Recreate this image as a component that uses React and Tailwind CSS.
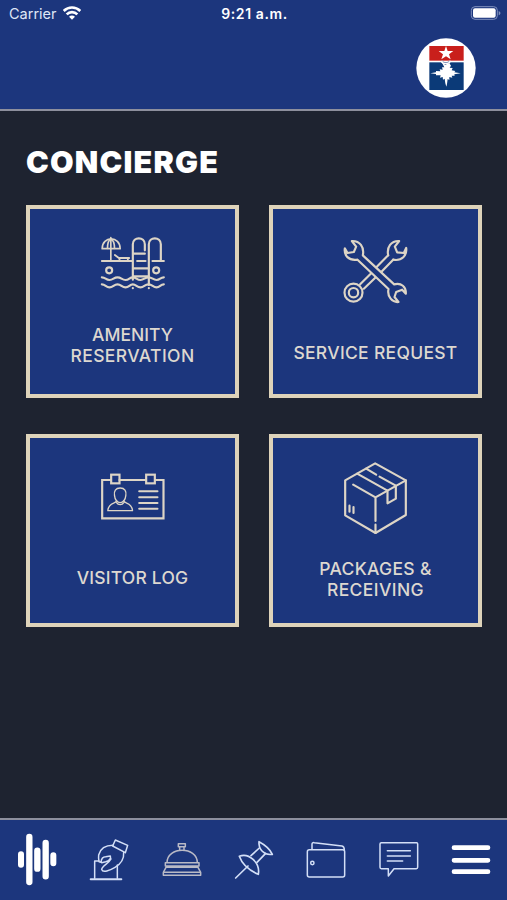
import clsx from 'clsx';

const CardIcon = ({ viewBox, children }) => (
  <svg viewBox={viewBox} className="w-[72px] h-[80px] shrink-0" fill="none" stroke="#ddd5c6" strokeWidth="6.5" strokeLinecap="round" strokeLinejoin="round">
    {children}
  </svg>
);

const NavIcon = ({ viewBox, children }) => (
  <svg viewBox={viewBox} className="w-[60px] h-[80px]" fill="none" stroke="#d3dff7" strokeWidth="4.5" strokeLinecap="round" strokeLinejoin="round">
    {children}
  </svg>
);

const PoolIcon = () => (
  <CardIcon viewBox="35.5 18 216 240">
    <path d="M51 71C51 32 105 32 105 71Z" strokeWidth="5" />
    <path d="M67 70C67 57 71 45 77 42C84 45 88 57 88 70M77 38V107" strokeWidth="5" />
    <path d="M50 108H141M89 90L101 99H132M103 99V107M128 99V107" strokeWidth="5.5" />
    <path d="M143 164V58C143 34 179 34 179 58V76" />
    <path d="M191 180V58C191 34 227 34 227 58V108M202 108H236M156 108H181" />
    <path d="M144 86H179M144 130H190M144 154H190" />
    <circle cx="72" cy="136" r="9" />
    <circle cx="213" cy="136" r="9" />
    <path d="M50 157C61 157 62 165 73 165S86 157 97 157S110 165 121 165S133 157 143 157S155 165 166 165S178 157 190 157S203 165 214 165S225 157 236 157" />
    <path d="M50 178C61 178 62 187 73 187S86 178 97 178S110 187 121 187S133 178 143 178S155 187 166 187S178 178 190 178S203 187 214 187S225 178 236 178" />
    <path d="M143 189V189.5M191 189V189.5" />
  </CardIcon>
);

const WrenchIcon = () => (
  <CardIcon viewBox="44.5 18 216 240">
    <path d="M105 178L142 141M116 191L155 154M149 131L189 91M166 143L204 104" />
    <circle cx="85" cy="203" r="27" />
    <circle cx="85" cy="203" r="14" />
    <path d="M189 91C184 66 198 47 222 48L209 65L216 82L236 84L243 69C246 91 230 109 204 104" />
    <path d="M80 48L93 65L86 81L67 84L59 70C56 91 70 108 97 104L190 192C185 215 202 233 220 231L208 216L213 201L231 194L242 206C243 185 229 173 207 178L113 91C118 66 104 47 80 48Z" fill="#1c367d" />
  </CardIcon>
);

const BadgeIcon = () => (
  <CardIcon viewBox="35.5 0 216 240">
    <path d="M77 60H51V175H235V60H210M103 60H182" strokeLinejoin="miter" />
    <rect x="78" y="44" width="25" height="26" strokeLinejoin="miter" />
    <rect x="183" y="44" width="26" height="26" strokeLinejoin="miter" />
    <path d="M162 94H217M162 112H217M162 129H217M162 146H217" strokeWidth="6" />
    <path d="M105 84C91 84 86 94 88 106C89 118 96 128 105 128S121 118 122 106C124 94 119 84 105 84Z" strokeWidth="4" />
    <path d="M94 123C91 132 70 127 68 152H142C140 127 119 132 116 123M94 128C99 136 111 136 116 128" strokeWidth="4" />
  </CardIcon>
);

const BoxIcon = () => (
  <CardIcon viewBox="44.5 30 216 240">
    <path d="M150 40L242 91V195L151 249L60 196V91Z" />
    <path d="M242 91L151 142L84 104M151 142V213M151 224V249" />
    <path d="M96 71L187 122V160L212 146V107L163 80M123 56L153 74" />
    <path d="M73 167V185M85 171V189" />
  </CardIcon>
);

const cards = [
  { icon: <PoolIcon />, offset: 'mt-[13px]', lines: [['AMENITY', 'tracking-[0px]'], ['RESERVATION', 'tracking-[0.4px]']] },
  { icon: <WrenchIcon />, offset: 'mt-[31px]', lines: [['SERVICE REQUEST', 'tracking-[0.3px]']] },
  { icon: <BadgeIcon />, offset: 'mt-[27px]', lines: [['VISITOR LOG', 'tracking-[0.2px]']] },
  { icon: <BoxIcon />, offset: 'mt-[18px]', lines: [['PACKAGES &', 'tracking-[0.3px]'], ['RECEIVING', 'tracking-[0.4px]']] },
];

function Header() {
  return (
    <header className="h-[111px] shrink-0 bg-[#1c367d] border-b-2 border-[#8d8f9d] text-white">
      <div className="grid grid-cols-3 items-center h-[27px] pl-[9px] pr-[6px]">
        <div className="flex items-center gap-[6px] text-[14.5px] text-[#dfe6f6]">
          Carrier
          <svg viewBox="0 0 54 42" className="w-[18px] h-[14px] -mt-[2px]" fill="none" stroke="#fff" strokeWidth="8">
            <path d="M2 15C16 1 38 1 52 15M11 25C20 16 34 16 43 25" />
            <path d="M27 41L18 32C23 27 31 27 36 32Z" fill="#fff" stroke="none" />
          </svg>
        </div>
        <div className="text-center text-[14px] font-semibold tracking-[0.6px] -ml-[1px]">9:21 a.m.</div>
        <svg viewBox="0 0 93 42" className="w-[31px] h-[14px] -mt-[2px] justify-self-end">
          <rect x="4" y="2" width="78" height="38" rx="11" fill="none" stroke="#7f90bd" strokeWidth="3" />
          <rect x="9" y="7" width="68" height="28" rx="6" fill="#fff" />
          <path d="M86 15C93 18 93 25 86 28Z" fill="#7f90bd" />
        </svg>
      </div>
      <div className="flex justify-end pr-[31px] pt-[11px]">
        <svg viewBox="48 112 180 180" className="w-[60px] h-[60px]">
          <circle cx="138" cy="202" r="89" fill="#fff" />
          <rect x="88" y="136" width="103" height="44" fill="#c91f1b" />
          <rect x="88" y="185" width="103" height="83" fill="#0b3a78" />
          <path d="M138 136L143 151H160L147 161L152 176L138 167L124 176L129 161L116 151H133Z" fill="#fff" />
          <path d="M126 186L136 192L148 187L153 195L149 201L158 202L155 209L166 211L163 215L182 218L163 221L164 225L155 225L157 231L148 229V238L143 235L141 250L139 258L136 248L134 234L129 237L128 229L120 231L122 224L108 224V220L91 218L108 215V211L121 212L119 206L128 207L126 200L133 200Z" fill="#fff" />
          <path d="M124 181C127 191 147 191 151 180M134 197L144 194" fill="none" stroke="#fff" strokeWidth="5" />
          <path d="M126 179C131 188 145 188 149 179" fill="none" stroke="#7f98bd" strokeWidth="2.5" />
        </svg>
      </div>
    </header>
  );
}

function BottomNav() {
  return (
    <nav className="h-[82px] shrink-0 bg-[#1c367d] border-t-2 border-[#8d8f9d] flex justify-between pl-[7px] pr-[6px]">
      {/* sound bars */}
      <NavIcon viewBox="21 30 180 240">
        <g stroke="#fff">
          <path d="M63 133V164M160 136V160" strokeWidth="18" />
          <path d="M88 81V216M112 122V176M137 99V199" strokeWidth="19" />
        </g>
      </NavIcon>

      {/* ballot */}
      <NavIcon viewBox="238 30 180 240">
        <path d="M273 208H365" strokeWidth="6" />
        <path d="M285 205V153H298M353 205V165" />
        <path d="M347 90L384 106L377 128L339 108Z" />
        <path d="M340 106C319 106 302 116 297 135C296 142 297 149 298 155L304 157C305 145 310 140 318 140L332 138C335 146 328 152 318 155L306 158M334 147C327 161 308 167 306 178C309 190 331 181 346 172C361 163 374 151 372 127" />
      </NavIcon>

      {/* bell */}
      <NavIcon viewBox="5 30 180 240">
        <g stroke="#b9bac6">
          <path d="M84 101H105V110H84ZM88 110V120M101 110V120" />
          <path d="M50 158C50 108 141 108 141 158M45 158H146V168H45ZM47 172H143L151 187V196H39V187Z" />
          <path d="M40 187H150M83 172H105" />
        </g>
      </NavIcon>

      {/* pin */}
      <NavIcon viewBox="222 30 180 240">
        <path d="M257 204L294 168" strokeWidth="5" />
        <path d="M268 139C296 128 331 157 325 193C304 184 277 165 268 139Z" strokeWidth="5" />
        <path d="M327 95C325 117 342 137 367 133C360 117 344 104 327 95Z" strokeWidth="5" />
        <path d="M328 114L303 137M347 130L321 157" strokeWidth="5" />
      </NavIcon>

      {/* wallet */}
      <NavIcon viewBox="-11 30 180 240">
        <rect x="23" y="119" width="112" height="82" rx="6" />
        <path d="M37 118V103C37 99 40 97 44 98L127 108C132 109 134 112 134 120" />
        <circle cx="38" cy="159" r="5" />
      </NavIcon>

      {/* messages */}
      <NavIcon viewBox="206 30 180 240">
        <path d="M243 98H349Q352 98 352 102V172Q352 176 348 176H281L264 198V176H243Q239 176 239 172V102Q239 98 243 98Z" />
        <path d="M261 122H330M261 138H330M261 153H307" />
      </NavIcon>

      <NavIcon viewBox="423 30 180 240">
        <path d="M462 113H564M462 151H564M462 185H564" stroke="#fff" strokeWidth="14" />
      </NavIcon>
    </nav>
  );
}

export default function App() {
  return (
    <div className="w-full h-[900px] flex flex-col overflow-hidden bg-[#1e2330] font-['Inter',sans-serif]">
      <Header />

      <main className="flex-1 pl-[26px] pr-[25px]">
        <h1 className="mt-[31px] h-[40px] leading-[40px] text-[30.5px] font-black tracking-[1.2px] text-white whitespace-nowrap">CONCIERGE</h1>
        <div className="mt-[23px] grid grid-cols-2 gap-x-[30px] gap-y-[36px]">
          {cards.map((card, i) => (
            <div key={i} className="h-[193px] pt-[22px] bg-[#1c367d] border-4 border-[#ded3ba] flex flex-col items-center">
              {card.icon}
              <div className={clsx('text-center text-[17.5px] leading-[21px] font-medium text-[#ddd8d0] whitespace-nowrap', card.offset)}>
                {card.lines.map(([text, tracking]) => (
                  <div key={text} className={tracking}>{text}</div>
                ))}
              </div>
            </div>
          ))}
        </div>
      </main>

      <BottomNav />
    </div>
  );
}
